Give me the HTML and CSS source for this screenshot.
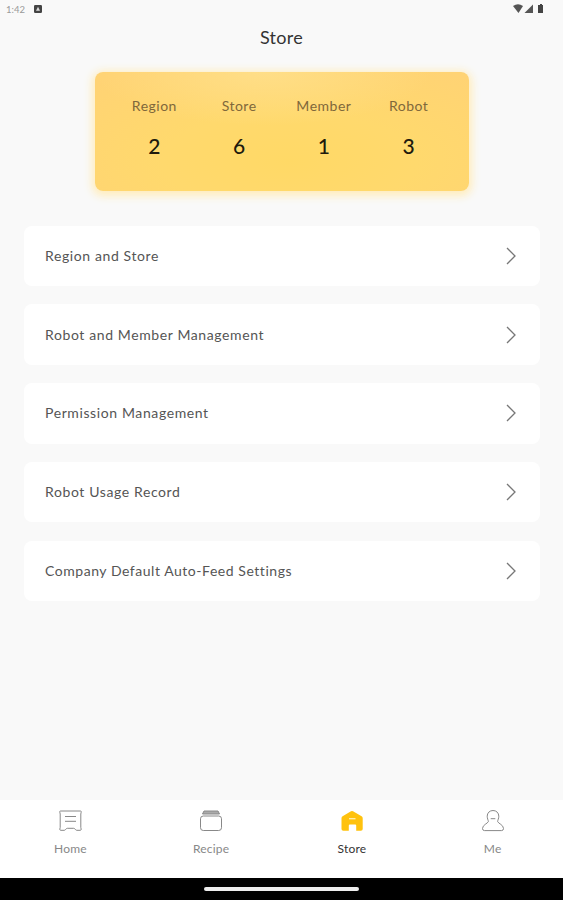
FILE: index.html
```
<!DOCTYPE html>
<html lang="en">
<head>
    <meta charset="UTF-8">
    <title>Store</title>
    <link rel="stylesheet" href="styles.css">
</head>
<body>

<div class="status">
    <span class="time">1:42</span>
    <svg class="app" width="8" height="8" viewBox="0 0 8 8">
        <rect width="8" height="8" rx="1.2" fill="#444"/>
        <path d="M2 5.8 L4 1.8 L6 5.8 Z" fill="#ddd"/>
    </svg>
    <svg class="signals" width="32" height="10" viewBox="0 0 32 10">
        <path d="M0 2 Q5 -1.6 10 2 L5.5 9 Z" fill="#555"/>
        <path d="M20 0.5 V9 H11.5 Z" fill="#555"/>
        <path d="M26 1 H27 V0 H29 V1 H30 V9 H25 V1 Z" fill="#444"/>
    </svg>
</div>

<h1>Store</h1>

<ul class="summary">
    <li><span>Region</span><b>2</b></li>
    <li><span>Store</span><b>6</b></li>
    <li><span>Member</span><b>1</b></li>
    <li><span>Robot</span><b>3</b></li>
</ul>

<ul class="menu">
    <li>
        <a>Region and Store</a>
        <svg width="10" height="18" viewBox="0 0 10 18"><path d="M1 1 L9 9 L1 17"/></svg>
    </li>
    <li>
        <a>Robot and Member Management</a>
        <svg width="10" height="18" viewBox="0 0 10 18"><path d="M1 1 L9 9 L1 17"/></svg>
    </li>
    <li>
        <a>Permission Management</a>
        <svg width="10" height="18" viewBox="0 0 10 18"><path d="M1 1 L9 9 L1 17"/></svg>
    </li>
    <li>
        <a>Robot Usage Record</a>
        <svg width="10" height="18" viewBox="0 0 10 18"><path d="M1 1 L9 9 L1 17"/></svg>
    </li>
    <li>
        <a class="feed">Company Default Auto-Feed Settings</a>
        <svg width="10" height="18" viewBox="0 0 10 18"><path d="M1 1 L9 9 L1 17"/></svg>
    </li>
</ul>

<div class="tabs">
    <div class="tab">
        <svg width="24" height="24" viewBox="0 0 24 24">
            <path d="M2.5 2 H22.5 Q23.5 2 23.2 3.2 L22.8 5 V18.5 L23.2 20.2 Q23.3 21.3 22.3 21.3 H18.7 C17.3 21.3 17.2 19.3 15.7 19.3 H9.3 C7.8 19.3 7.7 21.3 6.3 21.3 H2.7 Q1.7 21.3 1.8 20.2 L2.2 18.5 V5 L1.8 3.2 Q1.5 2 2.5 2 Z"/>
            <path d="M7 7.5 H18 M7 12.3 H18"/>
        </svg>
        <span>Home</span>
    </div>
    <div class="tab">
        <svg width="24" height="24" viewBox="0 0 24 24">
            <path d="M5 2 H19 L20.5 5 H3.5 Z" class="lid"/>
            <rect x="1.5" y="7" width="21" height="14.5" rx="2.8"/>
        </svg>
        <span>Recipe</span>
    </div>
    <div class="tab active">
        <svg width="24" height="24" viewBox="0 0 24 24">
            <path d="M11 2.3 Q12 1.7 13 2.3 L21.6 7.3 Q22.7 8 22.7 9.3 V20 Q22.7 21.8 20.9 21.8 H16.2 V16.6 Q16.2 15.6 15.2 15.6 H9.8 Q8.8 15.6 8.8 16.6 V21.8 H3.3 Q1.5 21.8 1.5 20 V9.3 Q1.5 8 2.6 7.3 Z" class="house"/>
            <path d="M9 9.7 H15.5" class="window"/>
        </svg>
        <span>Store</span>
    </div>
    <div class="tab">
        <svg width="24" height="24" viewBox="0 0 24 24">
            <path d="M6.2 7.2 C6.2 3.8 8.7 1.5 12 1.5 S17.8 3.8 17.8 7.2 C17.8 9.5 16.8 11 16.6 12.5 C17.2 14.5 22.5 15.8 22.5 19.5 Q22.5 21.6 20.5 21.6 H3.5 Q1.5 21.6 1.5 19.5 C1.5 15.8 6.8 14.5 7.4 12.5 C7.2 11 6.2 9.5 6.2 7.2 Z"/>
            <path d="M9.7 9.7 H14.3"/>
        </svg>
        <span>Me</span>
    </div>
</div>

<div class="gesture"><div class="pill"></div></div>

</body>
</html>
```
FILE: styles.css
```
* {
    margin: 0;
    padding: 0;
    box-sizing: border-box;
}

body {
    display: flex;
    flex-direction: column;
    height: 900px;
    background: #f9f9f9;
    font-family: Lato, "Liberation Sans", sans-serif;
    color: #555;
    overflow: hidden;
}

ul {
    list-style: none;
}

.status {
    display: flex;
    align-items: center;
    height: 18px;
    padding: 0 18px 0 6px;
}

.time {
    width: 28px;
    font-size: 9.5px;
    color: #999;
}

.signals {
    margin-left: auto;
}

h1 {
    height: 54px;
    font-size: 18px;
    font-weight: 400;
    line-height: 38px;
    letter-spacing: 0.3px;
    text-align: center;
    color: #333;
}

.summary {
    display: flex;
    width: 374px;
    height: 119px;
    margin-left: 95px;
    padding: 0 18px 0 17px;
    border-radius: 8px;
    background:
        radial-gradient(ellipse 45% 45% at 45% 0%, rgba(255, 226, 145, 0.7), rgba(255, 226, 145, 0)),
        radial-gradient(ellipse 75% 90% at 52% 75%, #ffd966 0%, #ffd96d 45%, #ffd374 100%);
    box-shadow: 0 2px 8px 3px #ffedbd;
}

.summary li {
    flex: 1;
    text-align: center;
}

.summary span {
    display: block;
    margin-top: 24px;
    font-size: 14px;
    line-height: 20px;
    letter-spacing: 0.5px;
    color: #80683b;
}

.summary b {
    display: block;
    margin-top: 16px;
    font-size: 21px;
    font-weight: 500;
    line-height: 28px;
    color: #201a0d;
}

.menu {
    display: grid;
    gap: 18.3px;
    margin: 34.5px 23px 0 24px;
}

.menu li {
    display: flex;
    align-items: center;
    justify-content: space-between;
    height: 60.5px;
    padding: 0 24px 0 21px;
    border-radius: 8px;
    background: #fff;
}

.menu a {
    padding-bottom: 1px;
    font-size: 14px;
    letter-spacing: 0.61px;
    white-space: nowrap;
}

.menu .feed {
    letter-spacing: 0.54px;
}

.menu svg {
    fill: none;
    stroke: #777;
    stroke-width: 1.3;
}

.tabs {
    display: flex;
    height: 78px;
    margin-top: auto;
    background: #fff;
}

.tab {
    display: flex;
    flex: 1;
    flex-direction: column;
    align-items: center;
    padding-top: 9px;
    font-size: 12px;
    line-height: 16px;
    letter-spacing: 0.2px;
    color: #888;
}

.tab span {
    margin-top: 8px;
}

.tab svg {
    fill: none;
    stroke: #888;
    stroke-width: 1;
}

.tab .lid {
    fill: #aaa;
}

.tab.active {
    color: #333;
}

.tab .house {
    fill: #ffc20e;
    stroke: none;
}

.tab .window {
    stroke: #fff0b8;
    stroke-width: 1.3;
}

.gesture {
    height: 22px;
    padding-top: 9px;
    background: #000;
}

.pill {
    width: 155px;
    height: 4px;
    margin: 0 auto;
    border-radius: 2px;
    background: #eee;
}
```
